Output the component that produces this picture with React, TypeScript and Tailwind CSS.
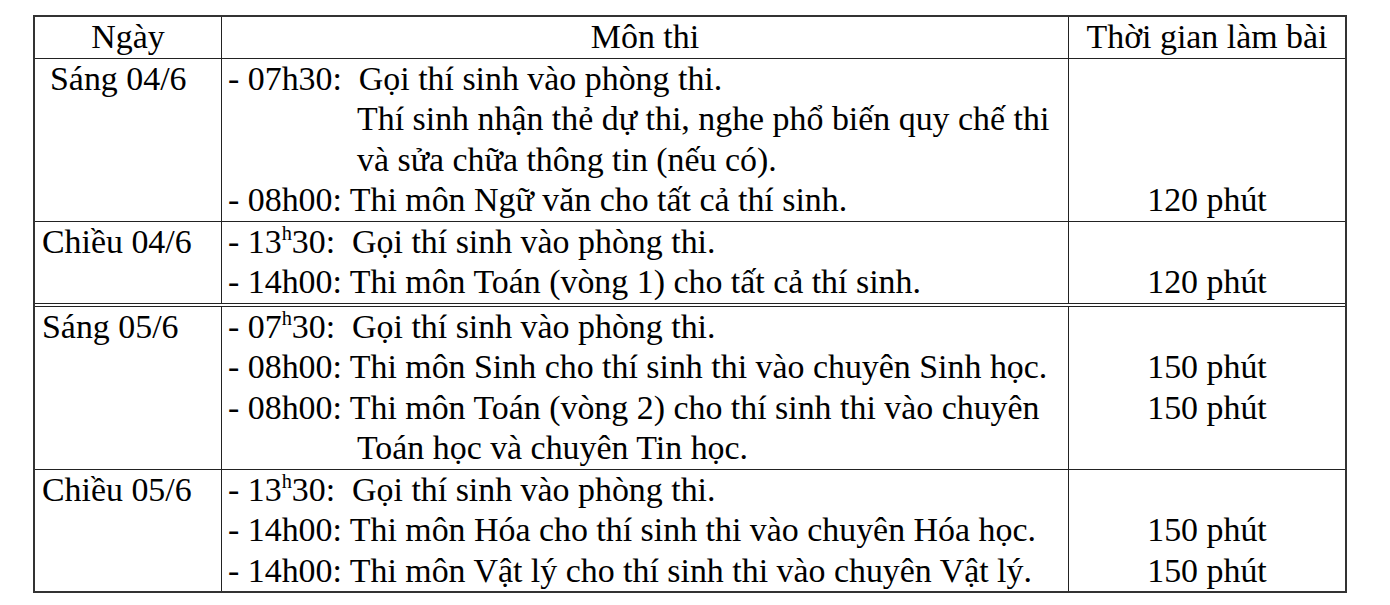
import React from 'react'

type Line = { text: React.ReactNode; indent?: boolean }
type Row = { day: string; dayPad?: boolean; lines: Line[]; times: string[]; double?: boolean }

const Sup = ({ c }: { c: string }) => (
  <sup className="text-[0.6em] top-[-0.62em]">{c}</sup>
)

const rows: Row[] = [
  {
    day: 'Sáng 04/6',
    dayPad: true,
    lines: [
      { text: '- 07h30:  Gọi thí sinh vào phòng thi.' },
      { text: 'Thí sinh nhận thẻ dự thi, nghe phổ biến quy chế thi', indent: true },
      { text: 'và sửa chữa thông tin (nếu có).', indent: true },
      { text: '- 08h00: Thi môn Ngữ văn cho tất cả thí sinh.' },
    ],
    times: ['', '', '', '120 phút'],
  },
  {
    day: 'Chiều 04/6',
    double: true,
    lines: [
      { text: <>- 13<Sup c="h" />30:  Gọi thí sinh vào phòng thi.</> },
      { text: '- 14h00: Thi môn Toán (vòng 1) cho tất cả thí sinh.' },
    ],
    times: ['', '120 phút'],
  },
  {
    day: 'Sáng 05/6',
    lines: [
      { text: <>- 07<Sup c="h" />30:  Gọi thí sinh vào phòng thi.</> },
      { text: '- 08h00: Thi môn Sinh cho thí sinh thi vào chuyên Sinh học.' },
      { text: '- 08h00: Thi môn Toán (vòng 2) cho thí sinh thi vào chuyên' },
      { text: 'Toán học và chuyên Tin học.', indent: true },
    ],
    times: ['', '150 phút', '150 phút', ''],
  },
  {
    day: 'Chiều 05/6',
    lines: [
      { text: <>- 13<Sup c="h" />30:  Gọi thí sinh vào phòng thi.</> },
      { text: '- 14h00: Thi môn Hóa cho thí sinh thi vào chuyên Hóa học.' },
      { text: '- 14h00: Thi môn Vật lý cho thí sinh thi vào chuyên Vật lý.' },
    ],
    times: ['', '150 phút', '150 phút'],
  },
]

export default function App() {
  return (
    <div
      className="min-h-screen bg-white pl-[33px] pt-[15px] text-black text-[33.9px] leading-[40.5px]"
      style={{ fontFamily: '"Liberation Serif", "Times New Roman", serif' }}
    >
      <div className="w-[1314px] border-2 border-[#333]">
        {/* header */}
        <div className="grid grid-cols-[187px_847px_1fr] border-b border-[#222]">
          <div className="border-r border-[#222] text-center">Ngày</div>
          <div className="border-r border-[#222] text-center">Môn thi</div>
          <div className="text-center">Thời gian làm bài</div>
        </div>

        {rows.map((row, i) => (
          <div
            key={i}
            className={
              'grid grid-cols-[187px_847px_1fr] ' +
              (i === rows.length - 1
                ? ''
                : row.double
                  ? 'border-b-4 border-double border-[#222]'
                  : 'border-b border-[#222]')
            }
          >
            <div className={'border-r border-[#222] ' + (row.dayPad ? 'pl-[15px]' : 'pl-[7px]')}>
              {row.day}
            </div>
            <div className="border-r border-[#222] pl-[6px] whitespace-pre">
              {row.lines.map((l, j) => (
                <div key={j} className={l.indent ? 'pl-[129px]' : ''}>
                  {l.text}
                </div>
              ))}
            </div>
            <div className="text-center">
              {row.times.map((t, j) => (
                <div key={j}>{t || '\u00a0'}</div>
              ))}
            </div>
          </div>
        ))}
      </div>
    </div>
  )
}
